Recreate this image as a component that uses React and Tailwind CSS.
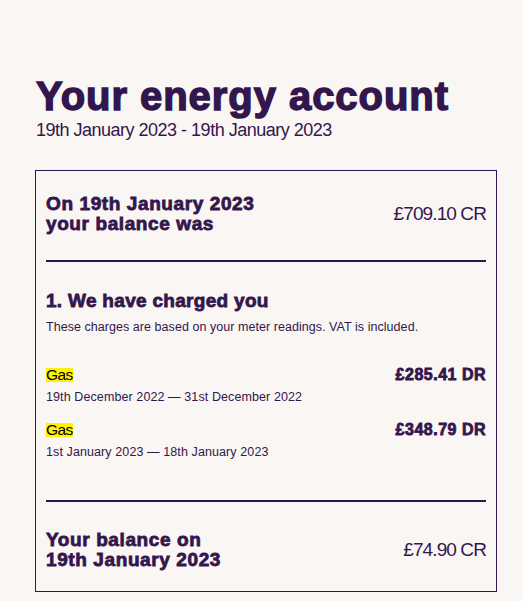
const CHARGES = [
  { label: "Gas", period: "19th December 2022 — 31st December 2022", amount: "£285.41 DR" },
  { label: "Gas", period: "1st January 2023 — 18th January 2023", amount: "£348.79 DR" },
];

// the heavy weight of the original face is faked with a thin stroke
const HEAVY = "font-bold [-webkit-text-stroke:0.8px_#33164d]";

export default function App() {
  return (
    <div
      className="min-h-[601px] bg-[#faf6f3] text-[#33164d] px-[35px] pt-[74px]"
      style={{ fontFamily: '"Liberation Sans", Arial, sans-serif' }}
    >
      <h1 className="text-[40px] leading-[44px] tracking-[0.95px] pl-px font-bold [-webkit-text-stroke:1.4px_#33164d]">
        Your energy account
      </h1>
      <p className="text-[18px] leading-[22px] tracking-[-0.5px] pl-px mt-px">
        19th January 2023 - 19th January 2023
      </p>

      <div className="mt-[29px] w-[462px] border border-[#33164d] px-[10px]">
        <div className="flex justify-between items-center pt-[23px] pb-[26px]">
          <h2 className={`text-[19px] leading-[20px] tracking-[0.6px] ${HEAVY}`}>
            On 19th January 2023
            <br />
            your balance was
          </h2>
          <span className="text-[19px] tracking-[-0.9px]">£709.10 CR</span>
        </div>
        <div className="h-[2px] bg-[#33164d]" />

        <div className="pt-[28px] pb-[40px]">
          <h2 className={`text-[19px] leading-[22px] tracking-[0.3px] ${HEAVY}`}>
            1. We have charged you
          </h2>
          <p className="text-[12.5px] leading-[16px] tracking-[0.05px] mt-[7px]">
            These charges are based on your meter readings. VAT is included.
          </p>
          <div className="mt-[31px] flex flex-col gap-[16px]">
            {CHARGES.map((c, i) => (
              <div key={i} className="flex justify-between items-start">
                <div>
                  <div className="text-[15.5px] leading-[18px] tracking-[-0.6px]">
                    <span className="bg-[#fff200] text-black leading-[14px] inline-block">
                      {c.label}
                    </span>
                  </div>
                  <p className="text-[12.5px] leading-[16px] tracking-[0.1px] mt-[5px]">
                    {c.period}
                  </p>
                </div>
                <span className={`text-[16px] leading-[18px] tracking-[0.5px] ${HEAVY} [-webkit-text-stroke-width:0.6px]`}>
                  {c.amount}
                </span>
              </div>
            ))}
          </div>
        </div>
        <div className="h-[2px] bg-[#33164d]" />

        <div className="flex justify-between items-center pt-[28px] pb-[21px]">
          <h2 className={`text-[19px] leading-[20px] tracking-[0.6px] ${HEAVY}`}>
            Your balance on
            <br />
            19th January 2023
          </h2>
          <span className="text-[19px] tracking-[-0.9px]">£74.90 CR</span>
        </div>
      </div>
    </div>
  );
}
